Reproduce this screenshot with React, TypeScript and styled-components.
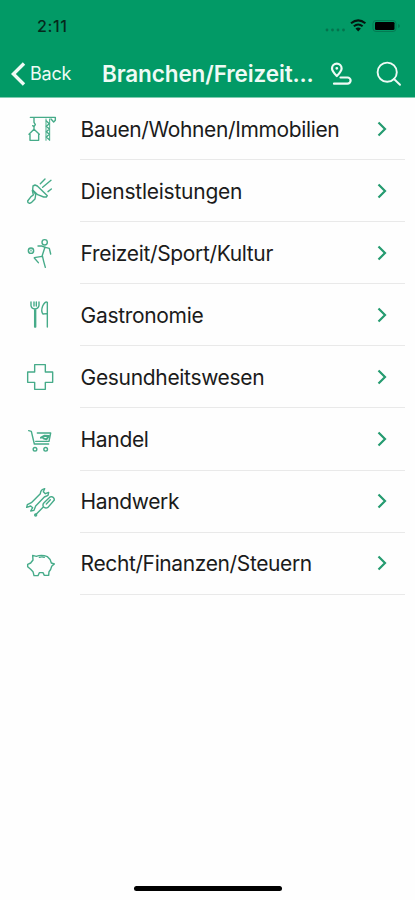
import React from 'react';
import styled, { createGlobalStyle } from 'styled-components';

const GREEN = '#029a66';

const GlobalStyle = createGlobalStyle`
  * { box-sizing: border-box; }
  body { margin: 0; background: #fff; font-family: Inter, "Liberation Sans", sans-serif; }
`;

const Screen = styled.div`
  display: flex;
  flex-direction: column;
  width: 415px;
  height: 900px;
  overflow: hidden;
  background: #fefefe;
`;

const Header = styled.header`
  flex: none;
  height: 98px;
  background: ${GREEN};
  border-bottom: 1px solid #7fcbb0;
`;

const StatusBar = styled.div`
  display: flex;
  align-items: center;
  justify-content: space-between;
  height: 52px;
  padding: 0 13px 0 37px;
`;

const Clock = styled.span`
  font-size: 16px;
  line-height: 20px;
  font-weight: 500;
  letter-spacing: 0.6px;
  color: #05291c;
`;

const NavBar = styled.div`
  display: flex;
  align-items: center;
  height: 45px;
  padding: 0 13px 1px 11px;
  color: #effaf5;
`;

const BackButton = styled.button`
  display: flex;
  align-items: center;
  gap: 4px;
  width: 91px;
  padding: 0;
  border: 0;
  background: none;
  color: inherit;
  font-family: inherit;
  font-size: 18px;
  letter-spacing: -0.2px;
`;

const BackText = styled.span`
  padding-bottom: 2px;
`;

const Title = styled.h1`
  width: 216px;
  margin: 0;
  font-size: 22.5px;
  line-height: 30px;
  font-weight: 600;
  letter-spacing: -0.12px;
  white-space: nowrap;
`;

const Actions = styled.div`
  display: flex;
  flex: 1;
  align-items: center;
  justify-content: space-between;
  padding-left: 12px;
`;

const List = styled.ul`
  flex: 1;
  margin: 0;
  padding: 0;
  list-style: none;
`;

const Row = styled.li`
  display: flex;
  height: 62.1px;
`;

const IconCell = styled.div`
  display: flex;
  align-items: center;
  width: 80px;
  padding: 2px 0 0 15px;
`;

const RowBody = styled.div`
  display: flex;
  align-items: center;
  justify-content: space-between;
  width: 325px;
  padding: 0 18px 0 0.6px;
  border-bottom: 1px solid #e9e9e9;
`;

const Label = styled.span<{ $tracking: number }>`
  padding-top: 2px;
  font-size: 21px;
  line-height: 28px;
  letter-spacing: ${(p) => p.$tracking}px;
  color: #1b1b1b;
  white-space: nowrap;
`;

const HomeArea = styled.footer`
  display: flex;
  justify-content: center;
  height: 14px;
`;

const HomeIndicator = styled.div`
  width: 148px;
  height: 5px;
  border-radius: 3px;
  background: #000;
`;

const IconSvg = styled.svg`
  display: block;
  fill: none;
  stroke: #46ab89;
  stroke-width: 4.2;
  stroke-linecap: round;
  stroke-linejoin: round;
`;

const CategoryIcon = ({ children }: { children: React.ReactNode }) => (
  <IconSvg width="60" height="50" viewBox="0 0 180 150">{children}</IconSvg>
);

const categories = [
  {
    name: 'Bauen/Wohnen/Immobilien',
    tracking: -0.37,
    icon: (
      <>
        <path d="M46 37H121V46L116 51L108 42M57 39V52L61 59L57 65L53 62M57 66V72M42 88L57 73L73 88M45 88V106H71V88" />
        <path d="M93 42V106M104 42V106" strokeWidth="3" />
        <path d="M94 48L103 56L94 64L103 72L94 80L103 88L94 96L103 104" />
      </>
    ),
  },
  {
    name: 'Dienstleistungen',
    tracking: -0.25,
    icon: (
      <path d="M54 57L60 54L67 57L97 86L94 90H86L68 83L53 69ZM55 70L62 83M52 70L55 84L48 89L38 102L39 107L44 109L50 106L60 96L62 84M76 50L90 36M83 61L108 40M99 74L109 66" />
    ),
  },
  {
    name: 'Freizeit/Sport/Kultur',
    tracking: -0.35,
    icon: (
      <>
        <circle cx="89" cy="40" r="8" />
        <circle cx="48" cy="65" r="8" />
        <path d="M44 61L52 68M52 61L44 68" strokeWidth="2" />
        <path d="M69 51H80L91 55L103 58L107 75M90 54L81 82L58 86M58 87L70 101M82 80L86 97L91 115" />
      </>
    ),
  },
  {
    name: 'Gastronomie',
    tracking: -0.32,
    icon: (
      <path d="M48 33V44Q49 53 60 54Q71 52 72 43V33M57 33V45M64 33V45M59 54V108M62 54V108M97 108V34Q90 30 83 45Q77 61 84 69L95 68" />
    ),
  },
  {
    name: 'Gesundheitswesen',
    tracking: -0.33,
    icon: <path d="M59 35H91V57H113V88H91V109H59V88H38V57H59Z" />,
  },
  {
    name: 'Handel',
    tracking: -0.33,
    icon: (
      <>
        <path d="M41 44L49 46L58 84H101M67 51H107L102 76H62" />
        <path d="M78 65L89 59L102 60L94 70L85 67" strokeWidth="6" />
        <circle cx="60" cy="100" r="5.5" />
        <circle cx="92" cy="100" r="5.5" />
      </>
    ),
  },
  {
    name: 'Handwerk',
    tracking: -0.37,
    icon: (
      <>
        <path d="M89 32Q77 34 76 47L49 74L37 80L35 88L47 84L53 89L47 99L57 97L62 84L88 57L99 52L101 43L91 47L85 41Z" />
        <path d="M110 56Q118 58 118 66L99 88Q91 93 85 86Q82 79 87 74L105 57ZM106 65L94 78M85 87L62 110" />
        <circle cx="62" cy="111" r="3" />
      </>
    ),
  },
  {
    name: 'Recht/Finanzen/Steuern',
    tracking: -0.38,
    icon: (
      <path d="M53 46L64 49Q80 43 97 50Q106 56 109 69L118 72L110 79Q108 89 102 95L101 106H88L84 98H73L69 107H57L54 95L47 88L38 80V73L47 69L54 60ZM73 52Q81 49 88 52" />
    ),
  },
];

export default function App() {
  return (
    <>
      <GlobalStyle />
      <Screen>
        <Header>
          <StatusBar>
            <Clock>2:11</Clock>
            <svg width="78" height="16" viewBox="0 0 78 16" fill="none">
              <g fill="#04734d">
                <circle cx="3" cy="12" r="1.4" />
                <circle cx="8.5" cy="12" r="1.4" />
                <circle cx="14" cy="12" r="1.4" />
                <circle cx="19.5" cy="12" r="1.4" />
              </g>
              <path d="M27 5.3Q34.2-.6 41.4 5.3M29.8 8.2Q34.2 4.7 38.6 8.2" stroke="#04150f" strokeWidth="2" />
              <path d="M31.5 10.6Q34.2 8.6 36.9 10.6L34.2 13.4Z" fill="#04150f" />
              <rect x="49" y="2.5" width="23" height="11" rx="3" stroke="#047b53" />
              <rect x="51" y="4" width="19.5" height="8" rx="1.3" fill="#000" />
              <path d="M74 6V10Q76 9.5 76 8T74 6" fill="#047b53" />
            </svg>
          </StatusBar>
          <NavBar>
            <BackButton>
              <svg width="15" height="24" viewBox="0 0 15 24" fill="none" stroke="currentColor" strokeWidth="3.4">
                <path d="M13 1.5L2.4 12L13 22.5" />
              </svg>
              <BackText>Back</BackText>
            </BackButton>
            <Title>Branchen/Freizeit...</Title>
            <Actions>
              <svg width="22" height="24" viewBox="0 0 22 24" fill="none" stroke="currentColor" strokeWidth="2.2" strokeLinecap="round" strokeLinejoin="round">
                <path d="M6.8 14Q2 9 2 6.4A4.8 4.8 0 0 1 11.6 6.4Q11.6 9 6.8 14Z" />
                <circle cx="6.8" cy="6.3" r="0.7" strokeWidth="1.4" />
                <path d="M10.5 15.5H17.5A3.1 3.1 0 0 1 17.5 21.7H4" />
              </svg>
              <svg width="26" height="26" viewBox="0 0 26 26" fill="none" stroke="currentColor" strokeWidth="1.9" strokeLinecap="round">
                <circle cx="11.2" cy="11.2" r="9.6" />
                <path d="M18 18L24 23.8" />
              </svg>
            </Actions>
          </NavBar>
        </Header>
        <List>
          {categories.map((item) => (
            <Row key={item.name}>
              <IconCell>
                <CategoryIcon>{item.icon}</CategoryIcon>
              </IconCell>
              <RowBody>
                <Label $tracking={item.tracking}>{item.name}</Label>
                <svg width="10" height="16" viewBox="0 0 10 16" fill="none" stroke="#259b70" strokeWidth="2.2">
                  <path d="M1.5 1.5L8 8L1.5 14.5" />
                </svg>
              </RowBody>
            </Row>
          ))}
        </List>
        <HomeArea>
          <HomeIndicator />
        </HomeArea>
      </Screen>
    </>
  );
}
